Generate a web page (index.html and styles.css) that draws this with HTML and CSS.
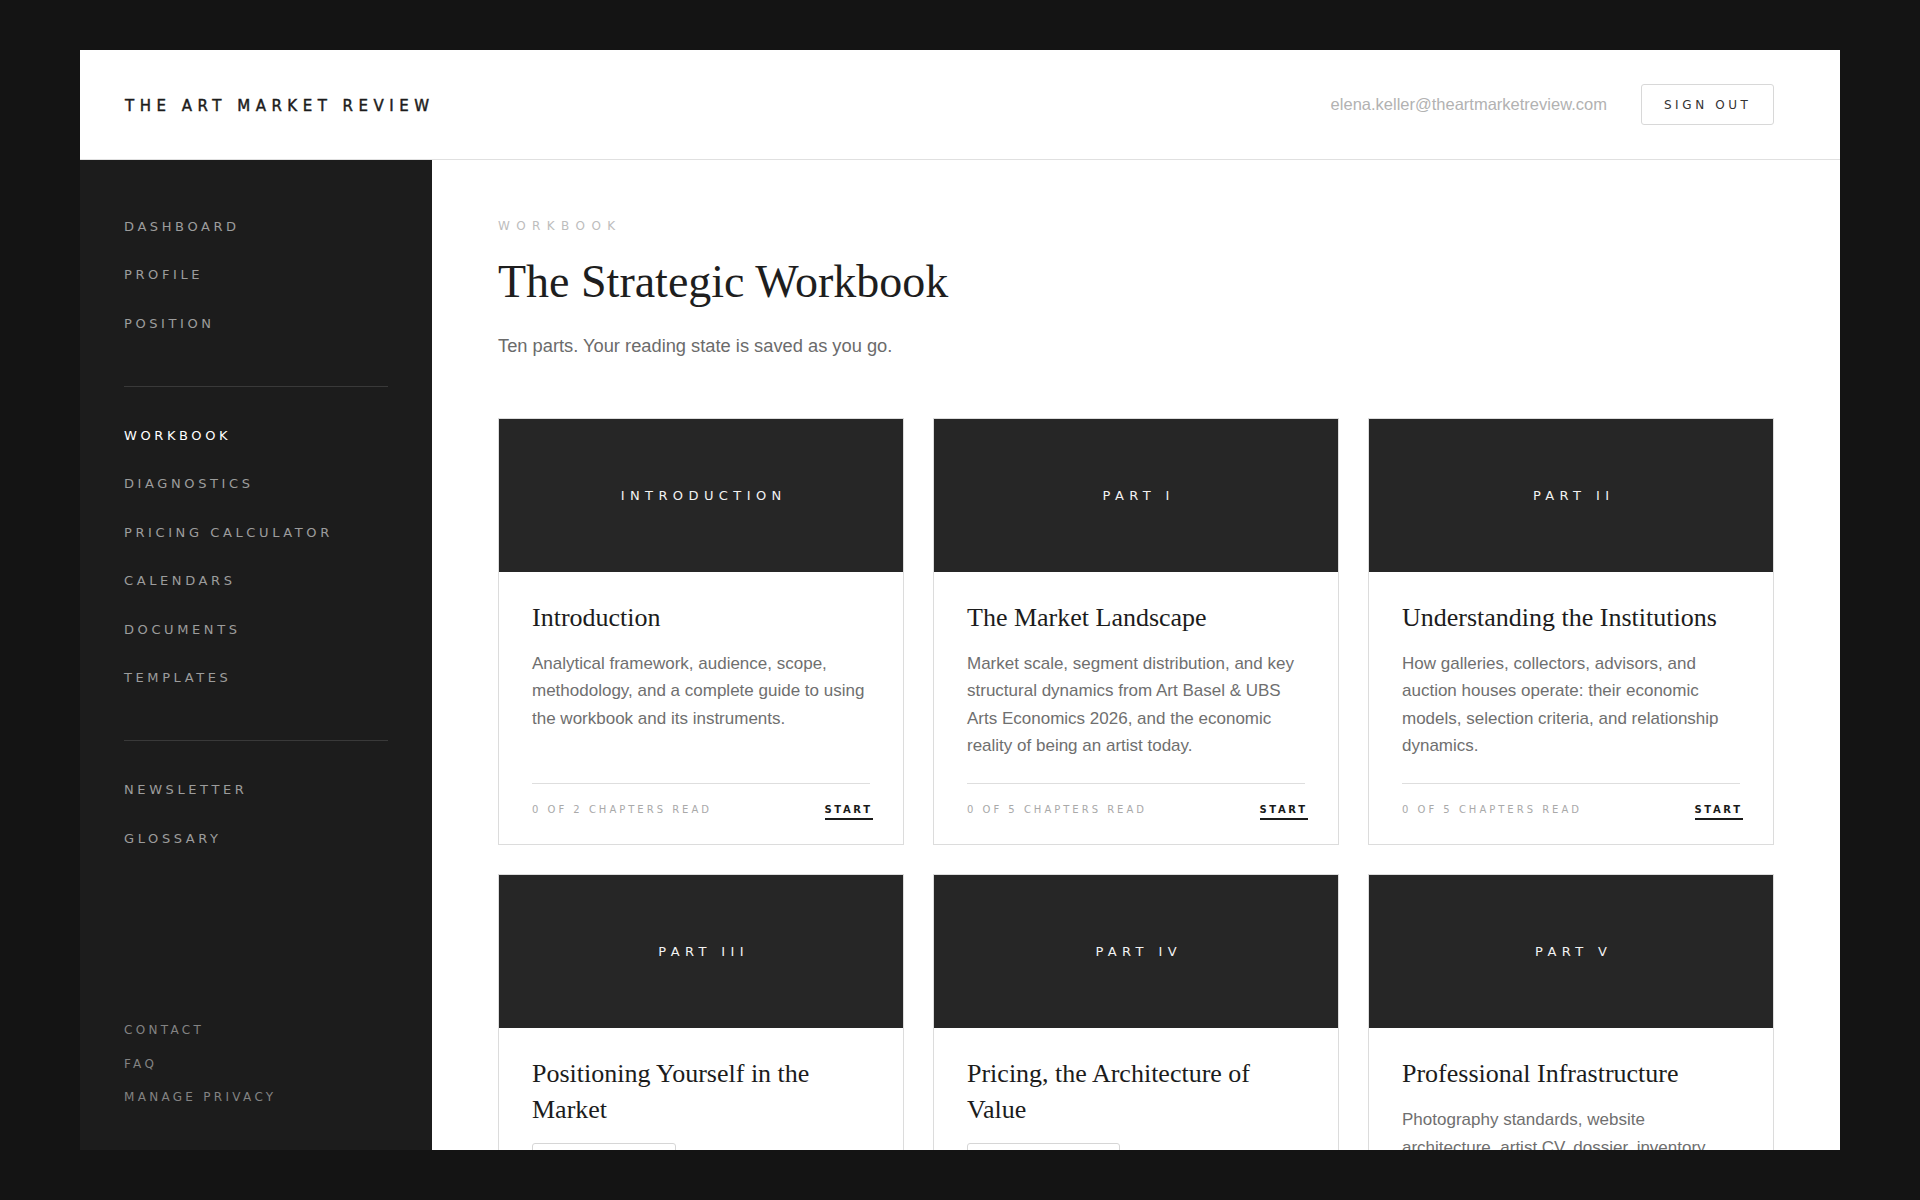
FILE: index.html
```html
<!DOCTYPE html>
<html lang="en">
<head>
<meta charset="utf-8">
<title>The Strategic Workbook · The Art Market Review</title>
<link rel="stylesheet" href="styles.css">
</head>
<body>
<div class="app">
  <header class="topbar">
    <div class="brand">THE ART MARKET REVIEW</div>
    <div class="account">
      <span class="account-email">elena.keller@theartmarketreview.com</span>
      <button class="btn-outline" type="button">SIGN OUT</button>
    </div>
  </header>

  <div class="layout">
    <nav class="sidebar">
      <div class="nav-group">
        <a class="nav-link" href="#">Dashboard</a>
        <a class="nav-link" href="#">Profile</a>
        <a class="nav-link" href="#">Position</a>
      </div>
      <hr class="nav-rule">
      <div class="nav-group">
        <a class="nav-link active" href="#">Workbook</a>
        <a class="nav-link" href="#">Diagnostics</a>
        <a class="nav-link" href="#">Pricing Calculator</a>
        <a class="nav-link" href="#">Calendars</a>
        <a class="nav-link" href="#">Documents</a>
        <a class="nav-link" href="#">Templates</a>
      </div>
      <hr class="nav-rule">
      <div class="nav-group">
        <a class="nav-link" href="#">Newsletter</a>
        <a class="nav-link" href="#">Glossary</a>
      </div>
      <div class="nav-group nav-foot">
        <a class="nav-small" href="#">Contact</a>
        <a class="nav-small" href="#">FAQ</a>
        <a class="nav-small" href="#">Manage Privacy</a>
      </div>
    </nav>

    <main class="main">
      <div class="eyebrow">WORKBOOK</div>
      <h1 class="page-title">The Strategic Workbook</h1>
      <p class="page-lede">Ten parts. Your reading state is saved as you go.</p>

      <section class="cards">
        <article class="card">
          <div class="card-cover">INTRODUCTION</div>
          <div class="card-body">
            <h2 class="card-title">Introduction</h2>
            <p class="card-desc">Analytical framework, audience, scope, methodology, and a complete guide to using the workbook and its instruments.</p>
            <div class="card-foot">
              <span class="card-progress">0 OF 2 CHAPTERS READ</span>
              <a class="card-action" href="#">START</a>
            </div>
          </div>
        </article>

        <article class="card">
          <div class="card-cover">PART I</div>
          <div class="card-body">
            <h2 class="card-title">The Market Landscape</h2>
            <p class="card-desc">Market scale, segment distribution, and key structural dynamics from Art Basel &amp; UBS Arts Economics 2026, and the economic reality of being an artist today.</p>
            <div class="card-foot">
              <span class="card-progress">0 OF 5 CHAPTERS READ</span>
              <a class="card-action" href="#">START</a>
            </div>
          </div>
        </article>

        <article class="card">
          <div class="card-cover">PART II</div>
          <div class="card-body">
            <h2 class="card-title">Understanding the Institutions</h2>
            <p class="card-desc">How galleries, collectors, advisors, and auction houses operate: their economic models, selection criteria, and relationship dynamics.</p>
            <div class="card-foot">
              <span class="card-progress">0 OF 5 CHAPTERS READ</span>
              <a class="card-action" href="#">START</a>
            </div>
          </div>
        </article>

        <article class="card">
          <div class="card-cover">PART III</div>
          <div class="card-body">
            <h2 class="card-title">Positioning Yourself in the Market</h2>
            <span class="card-tag">KEY CHAPTER</span>
          </div>
        </article>

        <article class="card">
          <div class="card-cover">PART IV</div>
          <div class="card-body">
            <h2 class="card-title">Pricing, the Architecture of Value</h2>
            <span class="card-tag">CORE SECTION</span>
          </div>
        </article>

        <article class="card">
          <div class="card-cover">PART V</div>
          <div class="card-body">
            <h2 class="card-title">Professional Infrastructure</h2>
            <p class="card-desc">Photography standards, website architecture, artist CV, dossier, inventory management, and the systems behind a sustainable practice.</p>
          </div>
        </article>
      </section>
    </main>
  </div>
</div>
</body>
</html>
```

FILE: styles.css
```css
* {
  box-sizing: border-box;
}

html, body {
  margin: 0;
  padding: 0;
}

body {
  background: #141414;
  font-family: "Liberation Sans", Arial, sans-serif;
  overflow: hidden;
}

/* Application frame */
.app {
  margin: 50px 80px;
  width: 1760px;
  height: 1100px;
  background: #ffffff;
  display: flex;
  flex-direction: column;
  overflow: hidden;
}

/* Top bar */
.topbar {
  flex-shrink: 0;
  height: 110px;
  border-bottom: 1px solid #e0e0e0;
  display: flex;
  align-items: center;
  justify-content: space-between;
  padding: 0 66px 0 45px;
}

.brand {
  font-family: "DejaVu Sans", sans-serif;
  font-weight: 400;
  font-size: 15px;
  letter-spacing: 5.5px;
  color: #1c1c1c;
  -webkit-text-stroke: 0.45px #1c1c1c;
  padding-top: 3px;
}

.account {
  display: flex;
  align-items: center;
  gap: 34px;
}

.account-email {
  font-family: "Liberation Sans", Arial, sans-serif;
  font-size: 16.5px;
  color: #b2b2b2;
}

.btn-outline {
  height: 41px;
  padding: 0 21.5px 0 22px;
  background: #fff;
  border: 1px solid #d8d8d8;
  border-radius: 3px;
  font-family: "DejaVu Sans", sans-serif;
  font-size: 12px;
  letter-spacing: 3.6px;
  color: #333333;
  cursor: pointer;
}

/* Body: sidebar + content */
.layout {
  flex: 1;
  display: flex;
  min-height: 0;
}

.sidebar {
  width: 352px;
  flex-shrink: 0;
  background: #1c1c1c;
  padding: 43px 44px 35px;
  display: flex;
  flex-direction: column;
}

.nav-group {
  display: flex;
  flex-direction: column;
}

.nav-link {
  display: block;
  padding: 16px 0;
  font-family: "DejaVu Sans", sans-serif;
  font-size: 13px;
  line-height: 16.4px;
  letter-spacing: 3.6px;
  text-transform: uppercase;
  text-decoration: none;
  color: #9c9c9c;
}

.nav-link.active {
  color: #ffffff;
}

.nav-rule {
  border: 0;
  height: 1px;
  background: #393939;
  margin: 37.5px 0 25.3px;
}

.nav-foot {
  margin-top: auto;
}

.nav-small {
  display: block;
  padding: 9px 0;
  font-family: "DejaVu Sans", sans-serif;
  font-size: 12px;
  line-height: 15.6px;
  letter-spacing: 3.3px;
  text-transform: uppercase;
  text-decoration: none;
  color: #838383;
}

/* Main content */
.main {
  flex: 1;
  min-width: 0;
  padding: 58px 66px 0;
  overflow: hidden;
}

.eyebrow {
  font-family: "DejaVu Sans", sans-serif;
  font-size: 12px;
  line-height: 16px;
  letter-spacing: 6.4px;
  color: #bdbdbd;
}

.page-title {
  margin: 20px 0 0;
  font-family: "Liberation Serif", "Times New Roman", serif;
  font-weight: 400;
  font-size: 46px;
  line-height: 1.2;
  color: #1e1e1e;
}

.page-lede {
  margin: 23px 0 0;
  font-size: 18.3px;
  line-height: 28.8px;
  color: #6b6b6b;
}

/* Workbook parts */
.cards {
  margin-top: 57.3px;
  display: grid;
  grid-template-columns: repeat(3, 1fr);
  gap: 29px;
}

.card {
  border: 1px solid #dcdcdc;
  background: #fff;
  display: flex;
  flex-direction: column;
}

.card-cover {
  height: 153px;
  background: #262626;
  display: flex;
  align-items: center;
  justify-content: center;
  padding-left: 5.4px;
  font-family: "DejaVu Sans", sans-serif;
  font-size: 13px;
  letter-spacing: 5.4px;
  color: #f2f2f2;
}

.card-body {
  flex: 1;
  display: flex;
  flex-direction: column;
  padding: 28px 33px 24.5px;
}

.card-title {
  margin: 0;
  font-family: "Liberation Serif", "Times New Roman", serif;
  font-weight: 400;
  font-size: 26px;
  line-height: 35.6px;
  color: #1c1c1c;
}

.card-desc {
  margin: 14px 0 0;
  padding-bottom: 23.6px;
  font-size: 17px;
  line-height: 27.5px;
  color: #6f6f6f;
}

.card-foot {
  margin-top: auto;
  border-top: 1px solid #dedede;
  padding-top: 18.5px;
  display: flex;
  justify-content: space-between;
  align-items: flex-start;
}

.card-progress {
  font-family: "DejaVu Sans", sans-serif;
  font-size: 10px;
  line-height: 14px;
  letter-spacing: 3px;
  color: #a9a9a9;
}

.card-action {
  font-family: "DejaVu Sans", sans-serif;
  font-weight: 700;
  font-size: 10px;
  line-height: 14px;
  letter-spacing: 2.6px;
  margin-right: -2.6px;
  color: #1a1a1a;
  text-decoration: none;
  padding-bottom: 1px;
  border-bottom: 2px solid #1a1a1a;
}

.card-tag {
  align-self: flex-start;
  margin-top: 15.5px;
  padding: 12px 20px;
  border: 1px solid #d6d6d6;
  border-radius: 3px;
  font-family: "DejaVu Sans", sans-serif;
  font-size: 10px;
  letter-spacing: 3px;
  color: #555;
}
```
